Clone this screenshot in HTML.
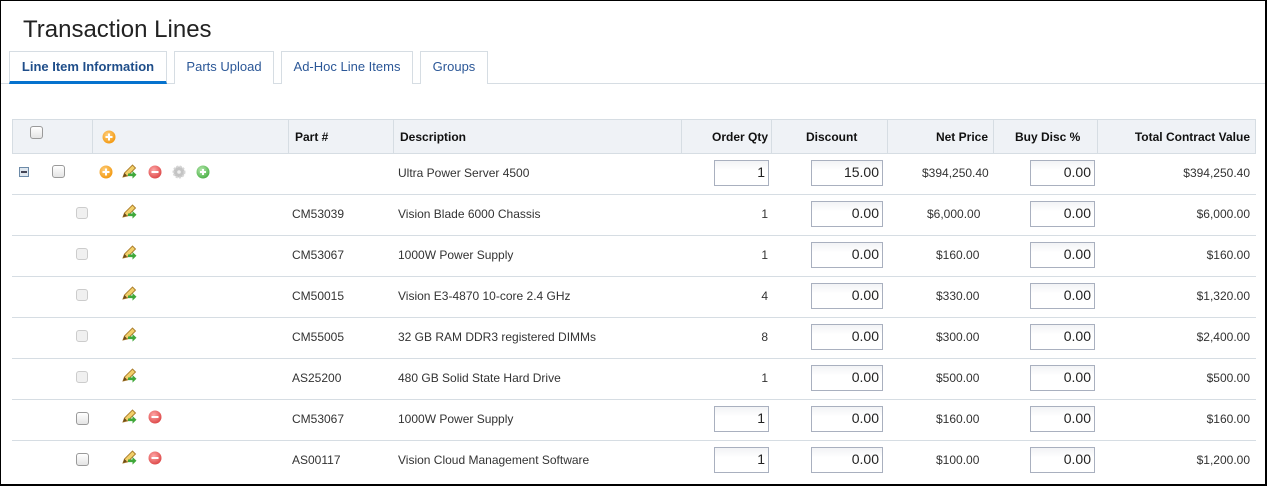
<!DOCTYPE html>
<html><head><meta charset="utf-8">
<style>
*{box-sizing:border-box;margin:0;padding:0}
body{width:1267px;height:486px;overflow:hidden;background:#fff;font-family:"Liberation Sans",Arial,sans-serif;color:#333;font-size:12px;position:relative}
.frame{position:absolute;left:0;top:0;width:1267px;height:486px;border:1px solid #000;border-right-width:2px;border-bottom-width:2px}
.a{position:absolute}
h1{position:absolute;left:23px;top:16px;font-size:24px;font-weight:normal;color:#222;letter-spacing:0}
.tab{position:absolute;top:51px;height:33px;border:1px solid #d6dde3;border-bottom:none;background:#fff;color:#2b5797;font-size:13px;line-height:30px;text-align:center}
.tab.act{font-weight:bold;border-bottom:3px solid #0572ce;height:33px;color:#1f4e8a}
.tabline{position:absolute;left:1px;top:83px;width:1264px;height:1px;background:#d6dde3}
.hdr{position:absolute;left:12px;top:119px;width:1244px;height:35px;background:#eff2f6;border:1px solid #d6dde3}
.hd{position:absolute;top:0;height:33px;border-left:1px solid #d6dde3}
.ht{position:absolute;top:10px;font-weight:bold;color:#111;font-size:12px}
.row{position:absolute;left:12px;width:1244px;height:41px;border-bottom:1px solid #d6dde3}
.t{position:absolute;top:12px;font-size:12px;color:#333;white-space:nowrap}
.r{text-align:right}
.in{position:absolute;top:6px;height:26px;border:1px solid #a9b0bf;background:linear-gradient(#f2f3f5,#fff 40%);font-size:14px;text-align:right;padding-right:3px;line-height:23px;color:#222}
.cb{position:absolute;width:13px;height:13px;border:1px solid #9a9a9a;border-radius:3px;background:linear-gradient(#fff,#e4e4e4)}
.cb.l{border-color:#ccc;background:#f0f0f0;width:12px;height:12px}
svg.ic{position:absolute;width:14px;height:14px}
svg.pn{width:16px;height:16px;margin-top:-2px}
</style></head><body>
<svg width="0" height="0" style="position:absolute">
<defs>
<radialGradient id="go" cx="40%" cy="35%" r="65%"><stop offset="0" stop-color="#ffd080"/><stop offset="1" stop-color="#f39a12"/></radialGradient>
<radialGradient id="gr" cx="40%" cy="35%" r="65%"><stop offset="0" stop-color="#ffa8a8"/><stop offset="1" stop-color="#de4b4b"/></radialGradient>
<radialGradient id="gg" cx="40%" cy="35%" r="65%"><stop offset="0" stop-color="#b8eab0"/><stop offset="1" stop-color="#4fb24a"/></radialGradient>
<symbol id="plus" viewBox="0 0 14 14"><circle cx="7" cy="7" r="6.5" fill="url(#go)"/><path d="M7 3.5v7M3.5 7h7" stroke="#fff" stroke-width="2"/></symbol>
<symbol id="minus" viewBox="0 0 14 14"><circle cx="7" cy="7" r="6.5" fill="url(#gr)"/><path d="M3.5 7h7" stroke="#fff" stroke-width="2"/></symbol>
<symbol id="gplus" viewBox="0 0 14 14"><circle cx="7" cy="7" r="6.5" fill="url(#gg)"/><path d="M7 4v6M4 7h6" stroke="#fff" stroke-width="2"/></symbol>
<symbol id="gear" viewBox="0 0 14 14"><circle cx="7" cy="7" r="5.5" fill="#c4c4c4" stroke="#d6d6d6" stroke-width="2" stroke-dasharray="2 1.3"/><circle cx="7" cy="7" r="1.8" fill="#eee"/></symbol>
<symbol id="pen" viewBox="0 0 16 16"><path d="M1 14l1.5-4 8-8 3 3-8 8z" fill="#f2cf6a" stroke="#a87a28" stroke-width=".9"/><path d="M1 14l1.5-4 2.5 2.5z" fill="#6b4a1a"/><path d="M6 10.5h4.5V8l4 3.8-4 3.8v-2.5H6z" fill="#3fa83a"/></symbol>
</defs></svg>

<h1>Transaction Lines</h1>
<div class="tabline"></div>
<div class="tab act" style="left:9px;width:158px">Line Item Information</div>
<div class="tab" style="left:174px;width:100px">Parts Upload</div>
<div class="tab" style="left:281px;width:132px">Ad-Hoc Line Items</div>
<div class="tab" style="left:420px;width:68px">Groups</div>

<div class="hdr">
 <div class="cb" style="left:17px;top:6px"></div>
 <div class="hd" style="left:79px"></div>
 <svg class="ic" style="left:89px;top:10px"><use href="#plus"/></svg>
 <div class="hd" style="left:275px"></div><div class="ht" style="left:282px">Part #</div>
 <div class="hd" style="left:380px"></div><div class="ht" style="left:387px">Description</div>
 <div class="hd" style="left:668px"></div><div class="ht r" style="right:487px">Order Qty</div>
 <div class="hd" style="left:758px"></div><div class="ht" style="left:793px">Discount</div>
 <div class="hd" style="left:874px"></div><div class="ht r" style="right:267px">Net Price</div>
 <div class="hd" style="left:980px"></div><div class="ht" style="left:1002px">Buy Disc %</div>
 <div class="hd" style="left:1084px"></div><div class="ht r" style="right:5px">Total Contract Value</div>
</div>

<!-- row 1 -->
<div class="row" style="top:154px">
 <div class="a" style="left:7px;top:13px;width:10px;height:10px;border:1px solid #6c8aa8;background:#dfe7ef"><div style="position:absolute;left:1px;top:3px;width:6px;height:2px;background:#445"></div></div>
 <div class="cb" style="left:40px;top:11px"></div>
 <svg class="ic" style="left:87px;top:11px"><use href="#plus"/></svg>
 <svg class="ic pn" style="left:110px;top:11px"><use href="#pen"/></svg>
 <svg class="ic" style="left:136px;top:11px"><use href="#minus"/></svg>
 <svg class="ic" style="left:160px;top:11px"><use href="#gear"/></svg>
 <svg class="ic" style="left:184px;top:11px"><use href="#gplus"/></svg>
 <div class="t" style="left:386px">Ultra Power Server 4500</div>
 <div class="in" style="left:702px;width:55px">1</div>
 <div class="in" style="left:799px;width:72px">15.00</div>
 <div class="t" style="left:910px">$394,250.40</div>
 <div class="in" style="left:1018px;width:65px">0.00</div>
 <div class="t r" style="right:6px">$394,250.40</div>
</div>

<div class="row" style="top:195px">
 <div class="cb l" style="left:64px;top:12px"></div>
 <svg class="ic pn" style="left:110px;top:10px"><use href="#pen"/></svg>
 <div class="t" style="left:280px">CM53039</div><div class="t" style="left:386px">Vision Blade 6000 Chassis</div>
 <div class="t r" style="right:488px">1</div>
 <div class="in" style="left:799px;width:72px">0.00</div>
 <div class="t" style="left:915px">$6,000.00</div>
 <div class="in" style="left:1018px;width:65px">0.00</div>
 <div class="t r" style="right:6px">$6,000.00</div>
</div>

<div class="row" style="top:236px">
 <div class="cb l" style="left:64px;top:12px"></div>
 <svg class="ic pn" style="left:110px;top:10px"><use href="#pen"/></svg>
 <div class="t" style="left:280px">CM53067</div><div class="t" style="left:386px">1000W Power Supply</div>
 <div class="t r" style="right:488px">1</div>
 <div class="in" style="left:799px;width:72px">0.00</div>
 <div class="t" style="left:924px">$160.00</div>
 <div class="in" style="left:1018px;width:65px">0.00</div>
 <div class="t r" style="right:6px">$160.00</div>
</div>

<div class="row" style="top:277px">
 <div class="cb l" style="left:64px;top:12px"></div>
 <svg class="ic pn" style="left:110px;top:10px"><use href="#pen"/></svg>
 <div class="t" style="left:280px">CM50015</div><div class="t" style="left:386px">Vision E3-4870 10-core 2.4 GHz</div>
 <div class="t r" style="right:488px">4</div>
 <div class="in" style="left:799px;width:72px">0.00</div>
 <div class="t" style="left:924px">$330.00</div>
 <div class="in" style="left:1018px;width:65px">0.00</div>
 <div class="t r" style="right:6px">$1,320.00</div>
</div>

<div class="row" style="top:318px">
 <div class="cb l" style="left:64px;top:12px"></div>
 <svg class="ic pn" style="left:110px;top:10px"><use href="#pen"/></svg>
 <div class="t" style="left:280px">CM55005</div><div class="t" style="left:386px">32 GB RAM DDR3 registered DIMMs</div>
 <div class="t r" style="right:488px">8</div>
 <div class="in" style="left:799px;width:72px">0.00</div>
 <div class="t" style="left:924px">$300.00</div>
 <div class="in" style="left:1018px;width:65px">0.00</div>
 <div class="t r" style="right:6px">$2,400.00</div>
</div>

<div class="row" style="top:359px">
 <div class="cb l" style="left:64px;top:12px"></div>
 <svg class="ic pn" style="left:110px;top:10px"><use href="#pen"/></svg>
 <div class="t" style="left:280px">AS25200</div><div class="t" style="left:386px">480 GB Solid State Hard Drive</div>
 <div class="t r" style="right:488px">1</div>
 <div class="in" style="left:799px;width:72px">0.00</div>
 <div class="t" style="left:924px">$500.00</div>
 <div class="in" style="left:1018px;width:65px">0.00</div>
 <div class="t r" style="right:6px">$500.00</div>
</div>

<div class="row" style="top:400px">
 <div class="cb" style="left:64px;top:12px"></div>
 <svg class="ic pn" style="left:110px;top:10px"><use href="#pen"/></svg>
 <svg class="ic" style="left:136px;top:10px"><use href="#minus"/></svg>
 <div class="t" style="left:280px">CM53067</div><div class="t" style="left:386px">1000W Power Supply</div>
 <div class="in" style="left:702px;width:55px">1</div>
 <div class="in" style="left:799px;width:72px">0.00</div>
 <div class="t" style="left:924px">$160.00</div>
 <div class="in" style="left:1018px;width:65px">0.00</div>
 <div class="t r" style="right:6px">$160.00</div>
</div>

<div class="row" style="top:441px;border-bottom:none">
 <div class="cb" style="left:64px;top:12px"></div>
 <svg class="ic pn" style="left:110px;top:10px"><use href="#pen"/></svg>
 <svg class="ic" style="left:136px;top:10px"><use href="#minus"/></svg>
 <div class="t" style="left:280px">AS00117</div><div class="t" style="left:386px">Vision Cloud Management Software</div>
 <div class="in" style="left:702px;width:55px">1</div>
 <div class="in" style="left:799px;width:72px">0.00</div>
 <div class="t" style="left:924px">$100.00</div>
 <div class="in" style="left:1018px;width:65px">0.00</div>
 <div class="t r" style="right:6px">$1,200.00</div>
</div>

<div class="frame"></div>
</body></html>
